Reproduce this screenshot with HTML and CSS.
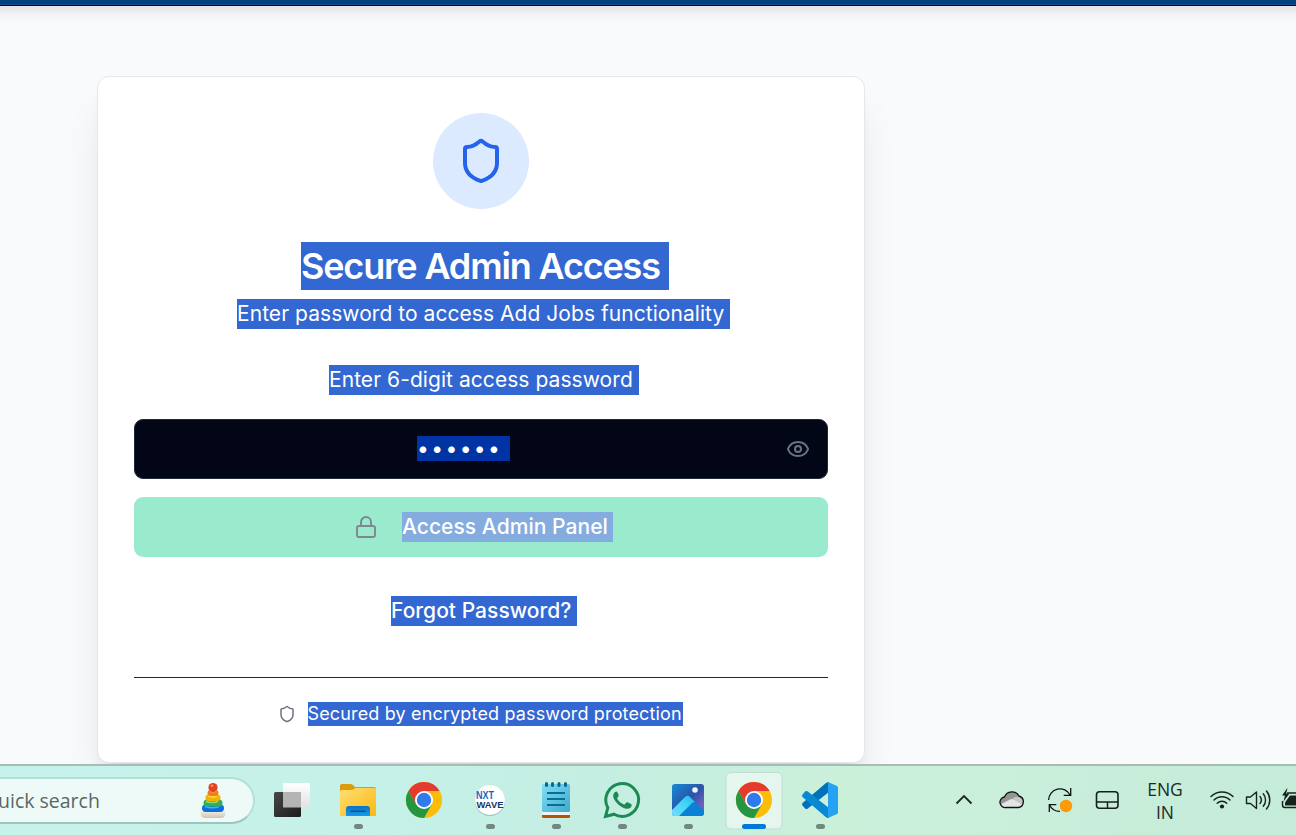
FILE: index.html
```html
<!DOCTYPE html>
<html lang="en">
<head>
<meta charset="utf-8">
<title>Secure Admin Access</title>
<link rel="stylesheet" href="styles.css">
</head>
<body>
<div class="screen">
  <header class="topbar"></header>
  <main class="page">
    <section class="card">
      <div class="badge">
        <svg width="48" height="48" viewBox="0 0 24 24" fill="none" stroke="#2563eb" stroke-width="2" stroke-linecap="round" stroke-linejoin="round"><path d="M20 13c0 5-3.5 7.5-7.66 8.95a1 1 0 0 1-.67-.01C7.5 20.5 4 18 4 13V6a1 1 0 0 1 1-1c2 0 4.500-1.200 6.240-2.720a1.170 1.170 0 0 1 1.520 0C14.510 3.810 17 5 19 5a1 1 0 0 1 1 1z"/></svg>
      </div>
      <h1 class="title"><span class="sel sel-title">Secure Admin Access</span></h1>
      <p class="subtitle"><span class="sel sel-subtitle">Enter password to access Add Jobs functionality</span></p>
      <p class="label"><span class="sel sel-label">Enter 6-digit access password</span></p>
      <div class="field">
        <span class="dots">••••••</span>
        <svg class="eye" width="24" height="24" viewBox="0 0 24 24" fill="none" stroke="#6b7280" stroke-width="2" stroke-linecap="round" stroke-linejoin="round"><path d="M2.062 12.348a1 1 0 0 1 0-.696 10.750 10.750 0 0 1 19.876 0 1 1 0 0 1 0 .696 10.750 10.750 0 0 1-19.876 0"/><circle cx="12" cy="12" r="3"/></svg>
      </div>
      <div class="submit">
        <svg width="24" height="24" viewBox="0 0 24 24" fill="none" stroke="#80868f" stroke-width="1.900" stroke-linecap="round" stroke-linejoin="round"><rect x="3" y="11" width="18" height="11" rx="2"/><path d="M7 11V7a5 5 0 0 1 10 0v4"/></svg>
        <span class="sel sel-submit">Access Admin Panel</span>
      </div>
      <p class="forgot"><span class="sel sel-forgot">Forgot Password?</span></p>
      <footer class="secured">
        <svg width="18" height="18" viewBox="0 0 24 24" fill="none" stroke="#6b7280" stroke-width="2" stroke-linecap="round" stroke-linejoin="round"><path d="M20 13c0 5-3.500 7.500-7.660 8.950a1 1 0 0 1-.67-.01C7.500 20.500 4 18 4 13V6a1 1 0 0 1 1-1c2 0 4.500-1.200 6.240-2.720a1.170 1.170 0 0 1 1.520 0C14.510 3.810 17 5 19 5a1 1 0 0 1 1 1z"/></svg>
        <span class="sel sel-secured">Secured by encrypted password protection</span>
      </footer>
    </section>
  </main>
  <nav class="taskbar">
    <div class="search">
      <span class="search-text">uick search</span>
      <svg class="toy" width="28" height="40" viewBox="0 0 28 40">
        <defs><linearGradient id="base" x2="0" y2="1"><stop offset="0" stop-color="#fffaf0"/><stop offset="1" stop-color="#cfc4b0"/></linearGradient></defs>
        <rect x="1.500" y="28" width="25" height="9" rx="4.500" fill="url(#base)"/>
        <rect x="3" y="23.500" width="22" height="7.500" rx="3.700" fill="#0b6fe0"/><path d="M6 25.500q8 2.500 14 0" stroke="#41b0ff" stroke-width="1.500" fill="none"/>
        <rect x="4.500" y="18.500" width="19" height="7" rx="3.500" fill="#35ad54"/><path d="M7 20.500q7 2 12 0" stroke="#8be079" stroke-width="1.500" fill="none"/>
        <rect x="6.500" y="13.500" width="15" height="6.500" rx="3.200" fill="#f3b400"/><path d="M9 15q5 2 9 0" stroke="#ffdf62" stroke-width="1.300" fill="none"/>
        <rect x="8.500" y="9" width="11" height="6" rx="3" fill="#f57c1b"/><path d="M11 10.500q3 1 6 0" stroke="#ffb05d" fill="none"/>
        <circle cx="14" cy="6.500" r="4.600" fill="#e2421f"/><circle cx="13" cy="4.800" r="1.400" fill="#ff8b62"/>
      </svg>
    </div>
    <div class="apps">
      <svg class="app" viewBox="0 0 66 69">
        <defs><linearGradient id="dk" x1="0" y1="0" x2="1" y2="1"><stop stop-color="#474747"/><stop offset="1" stop-color="#1c1c1c"/></linearGradient><linearGradient id="lt" x2="0" y2="1"><stop stop-color="#fff"/><stop offset="1" stop-color="#e2e2e2"/></linearGradient></defs>
        <rect x="24" y="17" width="27" height="24.500" rx="1" fill="url(#lt)"/><rect x="15" y="26" width="27" height="25" rx="1.500" fill="url(#dk)"/><path d="M24 26h18v15.500H24z" fill="#b4b4b4"/>
      </svg>
      <svg class="app" viewBox="0 0 66 69">
        <defs><linearGradient id="fold" x1="0" y1="0" x2="1" y2="1"><stop stop-color="#ffdf72"/><stop offset="1" stop-color="#fbb813"/></linearGradient><linearGradient id="pocket" x2="0" y2="1"><stop stop-color="#0c72c4"/><stop offset="1" stop-color="#159be9"/></linearGradient></defs>
        <path d="M15 20q0-2 2-2h8q2 0 3 1l2 2h19q2 0 2 2v10H15z" fill="#dc9b0b"/>
        <path d="M15 26q0-2 2-2h9q2 0 3-1l1-1h19q2 0 2 1.500V49q0 1-1 1H16q-1 0-1-1z" fill="url(#fold)"/>
        <path d="M21 50v-7q0-3 3-3h18q3 0 3 3v7z" fill="url(#pocket)"/><path d="M26 45.200h14" stroke="#07509b" stroke-width="1.500" stroke-linecap="round"/>
        <rect class="mark" x="29" y="58" width="9" height="5" rx="2.500"/>
      </svg>
      <svg class="app" viewBox="0 0 66 69">
        <g id="chrome"><circle cx="33" cy="34" r="18" fill="#fbbc0a"/><path d="M17.410 25A18 18 0 0 1 48.590 25H33L25.200 38.500z" fill="#e33b2e"/><path d="M17.410 25A18 18 0 0 0 33 52L40.800 38.500H25.200z" fill="#249641"/><circle cx="33" cy="34" r="9" fill="#fff"/><circle cx="33" cy="34" r="7.200" fill="#2f7bec"/></g>
      </svg>
      <svg class="app" viewBox="0 0 66 69">
        <circle cx="33" cy="34.800" r="15.200" fill="#9ec1ba"/><circle cx="33" cy="34" r="15" fill="#fff"/>
        <text x="19" y="33" class="nxt" textLength="18" lengthAdjust="spacingAndGlyphs">NXT</text><text x="19.500" y="42" class="wave" textLength="27" lengthAdjust="spacingAndGlyphs">WAVE</text>
        <rect class="mark" x="29" y="58" width="9" height="5" rx="2.500"/>
      </svg>
      <svg class="app" viewBox="0 0 66 69">
        <defs><linearGradient id="note" x1="0" y1="0" x2="1" y2="1"><stop stop-color="#81def6"/><stop offset="1" stop-color="#3fa9ce"/></linearGradient></defs>
        <rect x="19" y="43" width="28" height="9" rx="1.500" fill="#b3540b"/><path d="M19 43h28v6H19z" fill="#edf2f3"/><rect x="19" y="18" width="28" height="28" rx="1.500" fill="url(#note)"/>
        <path d="M24 27h18M24 33h18M24 39h18" stroke="#086f91" stroke-width="2"/>
        <path d="M23.500 17.500v2M29.500 17.500v2M36 17.500v2M42.500 17.500v2" stroke="#08688a" stroke-width="3" stroke-linecap="round"/>
        <rect class="mark" x="29" y="58" width="9" height="5" rx="2.500"/>
      </svg>
      <svg class="app" viewBox="0 0 66 69">
        <path d="M16.500 50.500l2.300-8.700a16.400 16.400 0 1 1 6.300 6.400z" fill="none" stroke="#1c8a55" stroke-width="3"/>
        <path d="M27.400 25.600c-1.600.2-3.400 2-3.200 4.700.3 4 6.700 11.700 13.500 12.500 3 .3 5-1.500 5-4.100 0-.7-4.400-2.700-5-2.500-.8.300-1.800 2.500-2.600 2.300-2.800-.9-5.600-3.400-7-6-.3-.8 1.600-1.900 1.600-2.800 0-.6-1.200-4.100-2.300-4.100z" fill="#1c8a55"/>
        <rect class="mark" x="29" y="58" width="9" height="5" rx="2.500"/>
      </svg>
      <svg class="app" viewBox="0 0 66 69">
        <defs><linearGradient id="sky" x1="0" y1="0" x2="1" y2="1"><stop stop-color="#168bd6"/><stop offset=".5" stop-color="#2853a8"/><stop offset=".8" stop-color="#7260bd"/></linearGradient><linearGradient id="hill" x1="1" y1="0" x2="0" y2="1"><stop stop-color="#28b5ec"/><stop offset=".4" stop-color="#40d4f6"/><stop offset="1" stop-color="#75dcff"/></linearGradient><clipPath id="ph"><rect x="17" y="18" width="32" height="32" rx="3"/></clipPath></defs>
        <g clip-path="url(#ph)"><path d="M17 18h32v32H17z" fill="url(#sky)"/><path d="M22 50l16-14.500q1.500-.5 3 1l8 8V50z" fill="#0a80d6"/><path d="M17 44l13-13q3-2.500 5 0l5 5q-1.500-.5-3 1L24 50h-7z" fill="url(#hill)"/><circle cx="40" cy="24" r="2.800" fill="#f3f0ff"/></g>
        <rect class="mark" x="29" y="58" width="9" height="5" rx="2.500"/>
      </svg>
      <svg class="app" viewBox="0 0 66 69">
        <rect x="5" y="6.500" width="56" height="56.500" rx="5" fill="#e4f6ed" stroke="#bfdfd2"/>
        <use href="#chrome"/>
        <rect x="21" y="58" width="24" height="5" rx="2.500" fill="#0078d7"/>
      </svg>
      <svg class="app" viewBox="0 0 66 69">
        <path d="M15.500 39.500q-1-1.200 0-2.500L39 17q1.500-1.200 3-.5V26L20.500 42.700q-1.200.8-2.200 0z" fill="#0072bc"/>
        <path d="M15.500 28.500q-1 1.200 0 2.500L39 51.200q1.500 1.200 3 .5V42L20.500 25.300q-1.200-.8-2.200 0z" fill="#0889d2"/>
        <path d="M41 16l9 4q1 .5 1 1.500v25q0 1-1 1.500l-9 4z" fill="#25a2f1"/>
        <rect class="mark" x="29" y="58" width="9" height="5" rx="2.500"/>
      </svg>
    </div>
    <div class="tray">
      <svg class="cell" viewBox="0 0 48 69"><path d="M16.500 37.500l7.500-7.500 7.500 7.500" fill="none" stroke="#1b2a25" stroke-width="1.800"/></svg>
      <svg class="cell" viewBox="0 0 48 69"><path d="M18 41.500a5.300 5.300 0 0 1-1.500-10.500 8 8 0 0 1 14.500-1 5.900 5.900 0 0 1-.5 11.500z" fill="#929795"/><path d="M18 41.500q-4-.5-4.500-3.500l8.500-4.500q2-1 4 0l8 4.500q-1 3.500-3.500 3.500z" fill="#e4e4e4"/><path d="M24 33q6-5 10.500 1 .8 2-.8 4.500L26 33.500z" fill="#c7c7c7"/><path d="M18 41.500a5.300 5.300 0 0 1-1.500-10.500 8 8 0 0 1 14.500-1 5.900 5.900 0 0 1-.5 11.500z" fill="none" stroke="#111" stroke-width="1.300"/></svg>
      <svg class="cell" viewBox="0 0 48 69"><path d="M12.600 34a11.400 11.400 0 0 1 21.500-5M34.700 22v7.300h-7M24 45.400a11.400 11.400 0 0 1-10.500-6.400M13.300 46v-7.300h7" fill="none" stroke="#111" stroke-width="1.300"/><circle cx="30" cy="40" r="6.200" fill="#ff9908"/></svg>
      <svg class="cell pad" viewBox="0 0 47 69"><path d="M12 36h22M23.500 36v6" stroke="#14201c" stroke-width="1.500"/><rect x="12.500" y="25.700" width="21.500" height="16.600" rx="3" fill="none" stroke="#14201c" stroke-width="1.600"/></svg>
      <div class="lang"><span>ENG</span><span>IN</span></div>
      <svg class="wifi" viewBox="0 0 36 69"><g fill="none" stroke="#16221d" stroke-width="1.500" stroke-linecap="round"><path d="M7 30.500a15.800 15.800 0 0 1 22 0M10 34a11.300 11.300 0 0 1 16 0M13.200 37.300a6.900 6.900 0 0 1 9.600 0"/></g><circle cx="18" cy="40.500" r="2.100" fill="#16221d"/></svg>
      <svg class="wifi" viewBox="0 0 36 69"><g fill="none" stroke="#16221d" stroke-width="1.400" stroke-linejoin="round" stroke-linecap="round"><path d="M6.500 31h4l6-5v16.500l-6-5h-4zM20 30.500a5.600 5.600 0 0 1 0 7M23.300 27.700a10 10 0 0 1 0 12.600M26.500 25a14 14 0 0 1 0 18"/></g></svg>
      <svg class="battery" viewBox="0 0 20 69"><path d="M11 27h12v14.500H9q-2.500 0-2.500-2.500v-4" fill="none" stroke="#16221d" stroke-width="1.500"/><path d="M14 29.500h8v10H9v-3z" fill="#16221d"/><path d="M11 22.500l-5 7h3l-1.500 6 6-8h-3.500l1.500-5z" fill="#16221d"/></svg>
    </div>
  </nav>
</div>
</body>
</html>
```
FILE: styles.css
```css
* { box-sizing: border-box; }
body { margin: 0; background: #f9fafc; font-family: Inter, "Liberation Sans", sans-serif; overflow: hidden; }
svg { display: block; flex: none; }
p, h1 { margin: 0; }
.screen { width: 1296px; height: 835px; display: flex; flex-direction: column; overflow: hidden; }
.topbar { height: 6px; flex: none; background: linear-gradient(#00427f 0 4px, #174f8b 4px 5px, #020617 5px); }
.page { height: 758px; flex: none; padding: 70px 0 0 97px; overflow: hidden; background: linear-gradient(#e4e5e8 0, #eaebee 4px, #f3f4f6 9px, #f9fafc 17px); }
.card { width: 768px; height: 687px; padding: 36px; display: flex; flex-direction: column; align-items: center; background: #fff; border: 1px solid #e5e7eb; border-radius: 12px; box-shadow: 0 30px 38px -7px rgba(0, 0, 0, .1), 0 12px 15px -9px rgba(0, 0, 0, .1); }
.badge { width: 96px; height: 96px; flex: none; border-radius: 50%; display: grid; place-items: center; background: #dbeafe; }
.sel { display: block; white-space: nowrap; color: #fff; background: #3367d1; font-size: 21px; line-height: 30px; height: 30px; }
.title { margin-top: 33px; font-weight: 600; }
.sel-title { width: 368px; margin-right: -8px; font-size: 36px; line-height: 48px; height: 48px; letter-spacing: -1.17px; }
.subtitle { margin-top: 9px; }
.sel-subtitle { width: 493px; margin-right: -5px; letter-spacing: .05px; }
.label { margin-top: 36px; }
.sel-label { width: 310px; margin-right: -6px; letter-spacing: .06px; }
.field { width: 694px; height: 60px; margin-top: 24px; padding: 0 17px; display: grid; grid-template-columns: 265px 93px 1fr; align-items: center; background: #020617; border: 1px solid #1e293b; border-radius: 9px; }
.dots { grid-column: 2; height: 25px; margin-top: -2px; background: #0034a4; color: #fff; font-size: 21px; line-height: 25px; letter-spacing: 2.4px; white-space: nowrap; }
.eye { justify-self: end; }
.submit { width: 694px; height: 60px; flex: none; margin-top: 18px; display: flex; align-items: center; padding-left: 220px; gap: 24px; background: #9aebce; border-radius: 9px; }
.sel-submit { width: 211px; background: #84acde; font-weight: 500; letter-spacing: .05px; }
.forgot { margin-top: 39px; }
.sel-forgot { width: 186px; margin-right: -6px; font-weight: 500; letter-spacing: .03px; }
.secured { width: 694px; margin-top: 51px; padding: 24px 2px 0 0; border-top: 1px solid #1e293b; display: flex; justify-content: center; align-items: center; gap: 12px; }
.sel-secured { width: 375px; font-size: 18px; line-height: 24px; height: 24px; letter-spacing: .15px; }
.taskbar { height: 71px; flex: none; display: flex; border-top: 2px solid #a6bdb6; background: linear-gradient(100deg, #c5f2eb 0%, #c5f1e8 30%, #c4eee2 45%, #cbf0da 65%, #c9eedb 80%, #c4ecd8 100%); }
.search { width: 255px; height: 47px; margin: 11px 4px 0 0; flex: none; display: flex; align-items: center; justify-content: space-between; padding-right: 26px; background: #eefaf8; border: 2px solid #b4dfd7; border-bottom-color: #9fc4bd; border-left: 0; border-radius: 0 24px 24px 0; }
.search-text { margin-left: -2px; font: 19.5px/28px "Open Sans", "Noto Sans", sans-serif; color: #5b6664; white-space: nowrap; }
.apps { display: flex; }
.app { width: 66px; height: 69px; }
.mark { fill: #71877f; }
.nxt { font: 700 10px/1 "Liberation Sans", sans-serif; fill: #1268bd; }
.wave { font: 700 9.5px/1 "Liberation Sans", sans-serif; fill: #14365f; }
.tray { display: flex; margin-left: 87px; }
.cell { width: 48px; height: 69px; }
.pad { width: 47px; }
.lang { width: 68px; padding-top: 12px; display: flex; flex-direction: column; align-items: center; font: 17.5px/23px "Open Sans", "Noto Sans", sans-serif; color: #1c2925; }
.wifi { width: 36px; height: 69px; }
.lang + .wifi { margin-left: 5px; }
.battery { width: 20px; height: 69px; }
```
